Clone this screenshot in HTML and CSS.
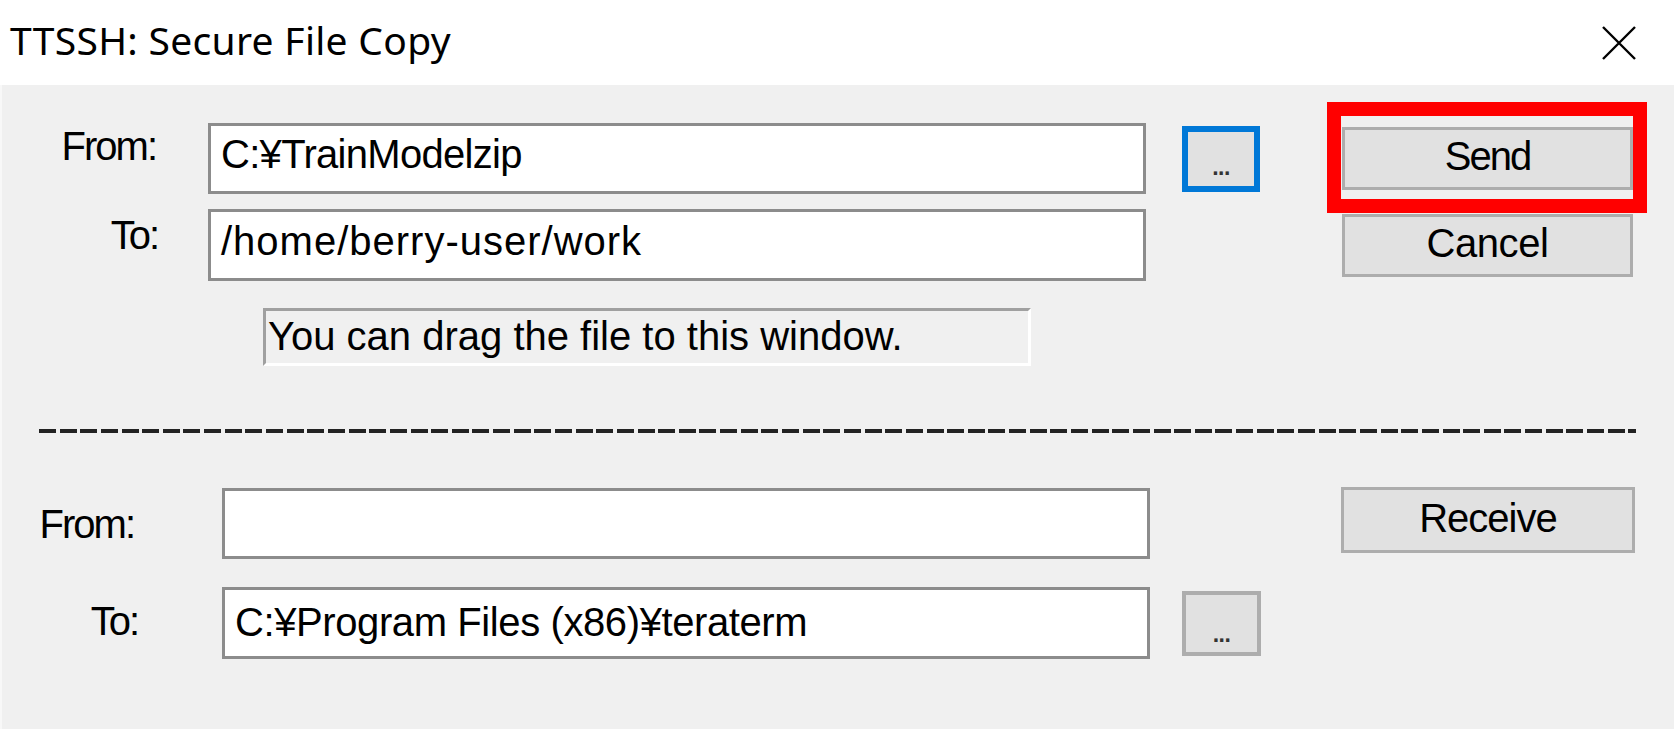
FILE: index.html
```html
<!DOCTYPE html>
<html lang="en">
<head>
<meta charset="utf-8">
<title>TTSSH: Secure File Copy</title>
<link rel="stylesheet" href="styles.css">
</head>
<body>
<div class="window">
  <div class="titlebar">
    <span class="title">TTSSH: Secure File Copy</span>
    <svg class="close" width="34" height="34" viewBox="0 0 34 34" aria-label="Close">
      <path d="M1 1 L33 33 M33 1 L1 33" stroke="#000" stroke-width="2.4" fill="none"/>
    </svg>
  </div>
  <div class="dialog">
    <div class="grid send-grid">
      <div class="lbl s-from">From:</div>
      <div class="field f1">C:¥TrainModelzip</div>
      <button class="browse focused">...</button>
      <button class="btn send">Send</button>

      <div class="lbl s-to">To:</div>
      <div class="field f2">/home/berry-user/work</div>
      <button class="btn cancel">Cancel</button>

      <div class="hint">You can drag the file to this window.</div>
    </div>

    <div class="separator"></div>

    <div class="grid recv-grid">
      <div class="lbl r-from">From:</div>
      <div class="field f3"></div>
      <button class="btn receive">Receive</button>

      <div class="lbl r-to">To:</div>
      <div class="field f4">C:¥Program Files (x86)¥teraterm</div>
      <button class="browse plain">...</button>
    </div>

    <div class="highlight"></div>
  </div>
</div>
</body>
</html>
```

FILE: styles.css
```css
* {
  box-sizing: border-box;
}

html, body {
  margin: 0;
  padding: 0;
}

body {
  width: 1674px;
  height: 729px;
  overflow: hidden;
  background: #f0f0f0;
  font-family: "Liberation Sans", Arial, sans-serif;
  color: #000;
}

.window {
  width: 1674px;
  height: 729px;
  display: flex;
  flex-direction: column;
}

/* Title bar */
.titlebar {
  height: 85px;
  flex: none;
  background: #ffffff;
  display: flex;
  align-items: center;
  justify-content: space-between;
  padding: 0 38px 0 10px;
}

.title {
  font-family: "Noto Sans", "Open Sans", sans-serif;
  font-size: 39px;
  padding-bottom: 6px;
  letter-spacing: 0.3px;
}

.close {
  display: block;
}

/* Dialog body */
.dialog {
  flex: 1;
  position: relative;
  background: #f0f0f0;
  border-left: 2px solid #f8f8f8;
}

.grid {
  display: grid;
  align-items: start;
  margin-left: -2px;
}

.send-grid {
  padding-top: 38px;
  grid-template-columns: 208px 974px 160px 292px;
  grid-template-rows: 71px 72px auto;
  row-gap: 15px;
}

.recv-grid {
  padding-top: 55px;
  grid-template-columns: 222px 960px 159px 294px;
  grid-template-rows: 71px 72px;
  row-gap: 28px;
}

/* Labels */
.lbl {
  font-size: 40px;
  line-height: 40px;
  text-align: right;
  letter-spacing: -2px;
}

.s-from { padding-right: 52px; margin-top: 3px; }
.s-to   { padding-right: 50px; margin-top: 6px; }
.r-from { padding-right: 88px; margin-top: 16px; }
.r-to   { padding-right: 84px; margin-top: 14px; }

/* Edit fields */
.field {
  height: 71px;
  background: #ffffff;
  border: 3px solid #8c8c8c;
  font-size: 40px;
  line-height: 40px;
  padding: 8px 0 0 10px;
  white-space: nowrap;
  overflow: hidden;
}

.send-grid .field { width: 938px; }
.recv-grid .field { width: 928px; }

.f1 { letter-spacing: -0.7px; }
.f2 { height: 72px; letter-spacing: 1px; padding-top: 9px; }
.f4 { height: 72px; letter-spacing: -0.4px; padding-top: 12px; }

/* Buttons */
button {
  font-family: inherit;
  color: #000;
  margin: 0;
  cursor: default;
}

.btn {
  background: #e1e1e1;
  border: 3px solid #adadad;
  font-size: 40px;
  line-height: 40px;
  padding: 0 0 5px 0;
  display: flex;
  align-items: center;
  justify-content: center;
}

.send {
  grid-column: 4;
  grid-row: 1;
  width: 291px;
  height: 63px;
  margin-top: 4px;
  letter-spacing: -2px;
}

.cancel {
  grid-column: 4;
  grid-row: 2;
  width: 291px;
  height: 63px;
  margin-top: 5px;
  letter-spacing: -0.4px;
}

.receive {
  grid-column: 3 / span 2;
  grid-row: 1;
  justify-self: end;
  width: 294px;
  height: 66px;
  margin-top: -1px;
  letter-spacing: -1px;
}

.browse {
  background: #e1e1e1;
  font-size: 23px;
  font-weight: bold;
  line-height: 22px;
  text-align: center;
  letter-spacing: -0.5px;
  display: block;
  color: #333;
}

.browse.focused {
  grid-column: 3;
  grid-row: 1;
  width: 78px;
  height: 66px;
  margin-top: 3px;
  border: 6px solid #0078d7;
  padding: 15px 0 0 0;
}

.browse.plain {
  grid-column: 3;
  grid-row: 2;
  width: 79px;
  height: 65px;
  margin-top: 4px;
  border: 4px solid #adadad;
  padding: 20px 0 0 0;
}

/* Hint static box */
.hint {
  grid-column: 2;
  grid-row: 3;
  width: 768px;
  height: 58px;
  margin: 12px 0 0 55px;
  border-top: 3px solid #a0a0a0;
  border-left: 3px solid #a0a0a0;
  border-right: 3px solid #ffffff;
  border-bottom: 3px solid #ffffff;
  font-size: 40px;
  line-height: 40px;
  padding: 5px 0 0 2px;
  white-space: nowrap;
}

/* Dashed separator */
.separator {
  margin: 63px 0 0 37px;
  width: 1597px;
  height: 4px;
  background: repeating-linear-gradient(to right, #222 0 17px, transparent 17px 20.64px);
}

/* Red annotation box over the Send button */
.highlight {
  position: absolute;
  left: 1325px;
  top: 17px;
  width: 320px;
  height: 111px;
  border: 14px solid #ff0000;
  pointer-events: none;
}
```
